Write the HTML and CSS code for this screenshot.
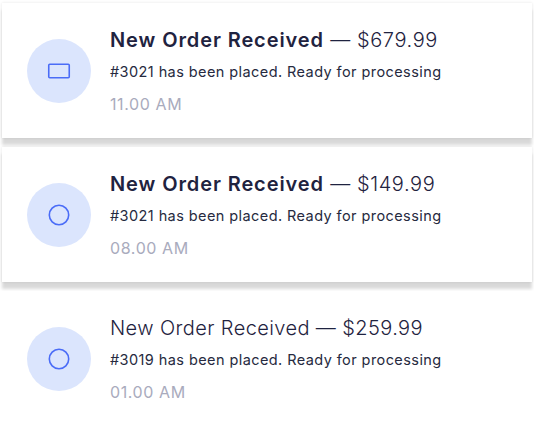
FILE: index.html
```html
<!DOCTYPE html>
<html lang="en">
<head>
<meta charset="utf-8">
<title>Notifications</title>
<link rel="stylesheet" href="styles.css">
</head>
<body>
<div class="list">
  <div class="prev-edge"></div>
  <div class="card raised">
    <div class="avatar">
      <svg width="24" height="18" viewBox="0 0 24 18"><rect x="1.75" y="2.25" width="20.5" height="13.5" rx="1" fill="none" stroke="#4a6cf7" stroke-width="1.6"/></svg>
    </div>
    <div class="body">
      <div class="title"><strong>New Order Received</strong> — $679.99</div>
      <div class="desc">#3021 has been placed. Ready for processing</div>
      <div class="time">11.00 AM</div>
    </div>
  </div>
  <div class="card raised">
    <div class="avatar">
      <svg width="24" height="24" viewBox="0 0 24 24"><circle cx="12" cy="12" r="9.7" fill="none" stroke="#4a6cf7" stroke-width="1.6"/></svg>
    </div>
    <div class="body">
      <div class="title"><strong>New Order Received</strong> — $149.99</div>
      <div class="desc">#3021 has been placed. Ready for processing</div>
      <div class="time">08.00 AM</div>
    </div>
  </div>
  <div class="card">
    <div class="avatar">
      <svg width="24" height="24" viewBox="0 0 24 24"><circle cx="12" cy="12" r="9.7" fill="none" stroke="#4a6cf7" stroke-width="1.6"/></svg>
    </div>
    <div class="body">
      <div class="title plain">New Order Received — $259.99</div>
      <div class="desc">#3019 has been placed. Ready for processing</div>
      <div class="time">01.00 AM</div>
    </div>
  </div>
</div>
</body>
</html>
```
FILE: styles.css
```css
html, body {
  margin: 0;
  padding: 0;
  background: #ffffff;
  overflow: hidden;
}
body {
  font-family: "Inter", "Noto Sans", sans-serif;
  color: #1f2340;
}
.list {
  display: flex;
  flex-direction: column;
  gap: 9px;
  padding: 0 2px;
}
.prev-edge {
  height: 0;
  margin: 0 10px -6px;
  box-shadow: 0 1px 3px rgba(0, 0, 0, 0.12);
}
.card {
  height: 135px;
  box-sizing: border-box;
  background: #ffffff;
  display: flex;
  align-items: center;
  padding-left: 25px;
  gap: 19px;
}
.card.raised {
  box-shadow: 0 7px 3px rgba(0, 0, 0, 0.15), 0 0 3px rgba(0, 0, 0, 0.10);
}
.avatar {
  width: 64px;
  height: 64px;
  border-radius: 50%;
  background: #dbe5fd;
  display: flex;
  align-items: center;
  justify-content: center;
  flex: none;
}
.avatar svg {
  display: block;
}
.title {
  font-size: 20px;
  line-height: 28px;
  font-weight: 300;
  letter-spacing: 0.6px;
  color: #1f2340;
}
.title strong {
  font-weight: 600;
  letter-spacing: 0.9px;
}
.title.plain {
  letter-spacing: 0.4px;
}
.desc {
  font-size: 14.5px;
  line-height: 20px;
  margin-top: 8px;
  letter-spacing: 0.42px;
  color: #262a40;
}
.time {
  font-size: 16px;
  line-height: 22px;
  margin-top: 11px;
  letter-spacing: 0.6px;
  color: #a9abbd;
}
```
